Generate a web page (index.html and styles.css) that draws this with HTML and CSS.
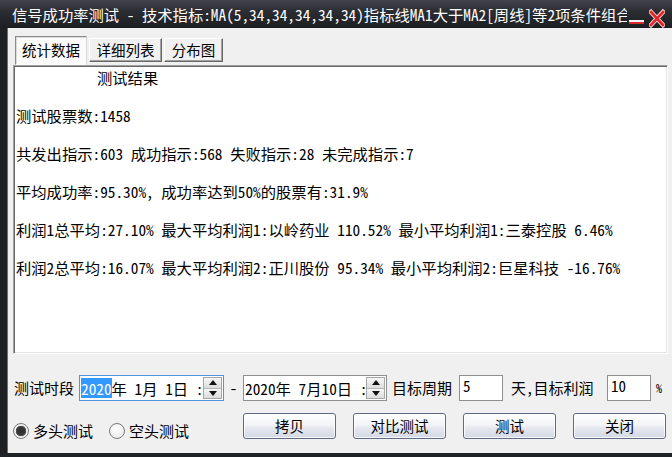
FILE: index.html
```html
<!DOCTYPE html>
<html>
<head>
<meta charset="utf-8">
<link rel="stylesheet" href="styles.css">
</head>
<body>
<div class="window">
  <div class="titlebar">
    <div class="title">信号成功率测试 - 技术指标:MA(5,34,34,34,34,34)指标线MA1大于MA2[周线]等2项条件组合</div>
    <div class="controls">
      <svg class="ctl" width="16" height="28" viewBox="0 0 16 28">
        <rect x="0" y="20" width="15" height="2" fill="#f4f4f4"/>
        <rect x="0" y="22" width="15" height="2" fill="#d42a2a"/>
      </svg>
      <svg class="ctl" width="16" height="28" viewBox="0 0 16 28">
        <path d="M2 12 L14 25 M14 12 L2 25" stroke="#f6d0d0" stroke-width="4.5" stroke-linecap="square"/>
        <path d="M2 12 L14 25 M14 12 L2 25" stroke="#e0262a" stroke-width="2.6" stroke-linecap="square"/>
      </svg>
    </div>
  </div>
  <div class="client">
    <div class="tabs">
      <div class="tab active">统计数据</div>
      <div class="tab">详细列表</div>
      <div class="tab tab3">分布图</div>
    </div>
    <div class="result">
      <div class="line heading">测试结果</div>
      <div class="line">测试股票数:1458</div>
      <div class="line">共发出指示:603 成功指示:568 失败指示:28 未完成指示:7</div>
      <div class="line">平均成功率:95.30%, 成功率达到50%的股票有:31.9%</div>
      <div class="line">利润1总平均:27.10% 最大平均利润1:以岭药业 110.52% 最小平均利润1:三泰控股 6.46%</div>
      <div class="line">利润2总平均:16.07% 最大平均利润2:正川股份 95.34% 最小平均利润2:巨星科技 -16.76%</div>
    </div>
    <div class="row1">
      <div class="lbl lbl-period">测试时段</div>
      <div class="datebox focused">
        <div class="datetext"><span class="sel">2020</span>年 1月 1日 :</div>
        <div class="spin"><div class="spin-up"><span class="tri-up"></span></div><div class="spin-down"><span class="tri-down"></span></div></div>
      </div>
      <div class="dash">-</div>
      <div class="datebox second">
        <div class="datetext">2020年 7月10日 :</div>
        <div class="spin"><div class="spin-up"><span class="tri-up"></span></div><div class="spin-down"><span class="tri-down"></span></div></div>
      </div>
      <div class="lbl lbl-cycle">目标周期</div>
      <div class="numbox">5</div>
      <div class="lbl lbl-profit">天,目标利润</div>
      <div class="numbox">10</div>
      <div class="lbl pct">%</div>
    </div>
    <div class="row2">
      <div class="radios">
        <span class="radio checked"></span><span class="rlabel">多头测试</span>
        <span class="radio second-radio"></span><span class="rlabel">空头测试</span>
      </div>
      <div class="buttons">
        <div class="btn">拷贝</div>
        <div class="btn">对比测试</div>
        <div class="btn">测试</div>
        <div class="btn">关闭</div>
      </div>
    </div>
  </div>
  <div class="bottombar"></div>
</div>
</body>
</html>
```
FILE: styles.css
```css
* { box-sizing: border-box; }
html, body { margin: 0; padding: 0; }
body {
  width: 672px;
  height: 457px;
  overflow: hidden;
  background: #1c1e22;
  font-family: "Noto Sans CJK SC", sans-serif;
  font-feature-settings: "hwid" 1;
  color: #000;
}
.window { width: 672px; height: 457px; display: flex; flex-direction: column; }

.titlebar {
  height: 28px;
  flex: none;
  display: flex;
  align-items: center;
  padding-left: 12px;
  background: linear-gradient(#41444b 0%, #2b2d32 40%, #1d1e22 100%);
  color: #fff;
}
.title {
  width: 615px;
  flex: none;
  overflow: hidden;
  white-space: nowrap;
  font-size: 15.3px;
  line-height: 28px;
}
.controls { display: flex; margin-left: 2px; gap: 4px; }
.ctl { display: block; }

.client {
  flex: none;
  height: 425px;
  border-left: 7px solid #1e2024;
  background: #f0f0f0;
  padding: 8px 0 0 6px;
  box-shadow: inset 1px 0 0 #707070;
}

.tabs { display: flex; align-items: flex-start; gap: 2px; margin-left: 2px; height: 29px; }
.tab {
  width: 73px;
  height: 24px;
  margin-top: 2px;
  font-size: 14.5px;
  line-height: 21px;
  text-align: center;
  background: #f0f0f0;
  border: 1px solid;
  border-color: #ffffff #696969 #696969 #ffffff;
  box-shadow: inset -1px -1px 0 #a0a0a0;
}
.tab.active {
  width: 72px;
  height: 29px;
  margin-top: 0;
  line-height: 26px;
  background: #fbfbfb;
  border-color: #8a8a8a #d8d8d8 #fbfbfb #8a8a8a;
  box-shadow: inset 1px 1px 0 #dcdcdc;
}
.tab.tab3 { width: 59px; }

.result {
  width: 655px;
  height: 289px;
  background: #fff;
  border: 1px solid;
  border-color: #a0a0a0 #ffffff #ffffff #a0a0a0;
  box-shadow: inset 1px 1px 0 #696969, inset -1px -1px 0 #e3e3e3;
  padding: 2px 0 0 2px;
  font-size: 15.3px;
}
.line { line-height: 19px; white-space: pre; margin-bottom: 19px; }
.line.heading { padding-left: 81px; }

.row1 {
  display: flex;
  align-items: center;
  height: 26px;
  margin-top: 21px;
  font-size: 15px;
}
.lbl { white-space: nowrap; line-height: 26px; }
.lbl-period { width: 66px; padding-left: 1px; }
.datebox {
  width: 145px;
  height: 26px;
  background: #fff;
  border: 1px solid #8e8f8f;
  display: flex;
  align-items: center;
  padding-right: 1px;
}
.datebox.focused { border-color: #4f95e0; }
.datebox.second { width: 144px; }
.datetext {
  flex: 1;
  overflow: hidden;
  white-space: pre;
  font-size: 15.3px;
  line-height: 20px;
  padding-left: 1px;
}
.sel { background: #3399ff; color: #fff; display: inline-block; line-height: 20px; }
.spin {
  width: 19px;
  height: 22px;
  border: 1px solid #a6a6a6;
  display: flex;
  flex-direction: column;
  background: #e8e8e8;
}
.spin-up, .spin-down {
  flex: 1;
  display: flex;
  align-items: center;
  justify-content: center;
  background: linear-gradient(#f6f6f6, #dcdcdc);
}
.spin-up { border-bottom: 1px solid #b8b8b8; }
.tri-up, .tri-down { width: 0; height: 0; border-left: 4px solid transparent; border-right: 4px solid transparent; }
.tri-up { border-bottom: 5px solid #111; }
.tri-down { border-top: 5px solid #111; }
.dash { width: 19px; text-align: center; line-height: 26px; }
.lbl-cycle { width: 72px; padding-left: 5px; }
.numbox {
  width: 44px;
  height: 26px;
  background: #fff;
  border: 1px solid #8e8f8f;
  font-size: 15px;
  line-height: 20px;
  padding-left: 3px;
  align-self: flex-start;
}
.lbl-profit { width: 104px; padding-left: 8px; }
.pct { padding-left: 5px; font-size: 12px; }

.row2 {
  display: flex;
  align-items: flex-start;
  height: 26px;
  margin-top: 12px;
  font-size: 15px;
}
.radios {
  width: 230px;
  height: 16px;
  margin-top: 10px;
  display: flex;
  align-items: center;
}
.radio {
  width: 16px;
  height: 16px;
  border-radius: 50%;
  border: 1px solid #7a7a7a;
  background: radial-gradient(circle at 40% 35%, #ffffff, #e4e4e4);
  position: relative;
  flex: none;
}
.radio.checked {
  background: radial-gradient(circle, #2a2a2a 0, #3a3a3a 4px, #555 5px, #e9e9e9 5.5px, #ffffff 8px);
}
.second-radio { margin-left: 16px; }
.rlabel { margin-left: 4px; line-height: 16px; }

.buttons { display: flex; gap: 17px; }
.btn {
  width: 93px;
  height: 26px;
  border: 1px solid #5f6b85;
  border-radius: 3px;
  background: linear-gradient(#ffffff 0%, #f3f4f7 45%, #e4e7ee 60%, #d3d8e4 100%);
  box-shadow: inset 0 0 0 1px rgba(255,255,255,0.8);
  text-align: center;
  line-height: 23px;
  font-size: 14.5px;
}

.bottombar { height: 4px; flex: none; background: #1f2227; }
```
